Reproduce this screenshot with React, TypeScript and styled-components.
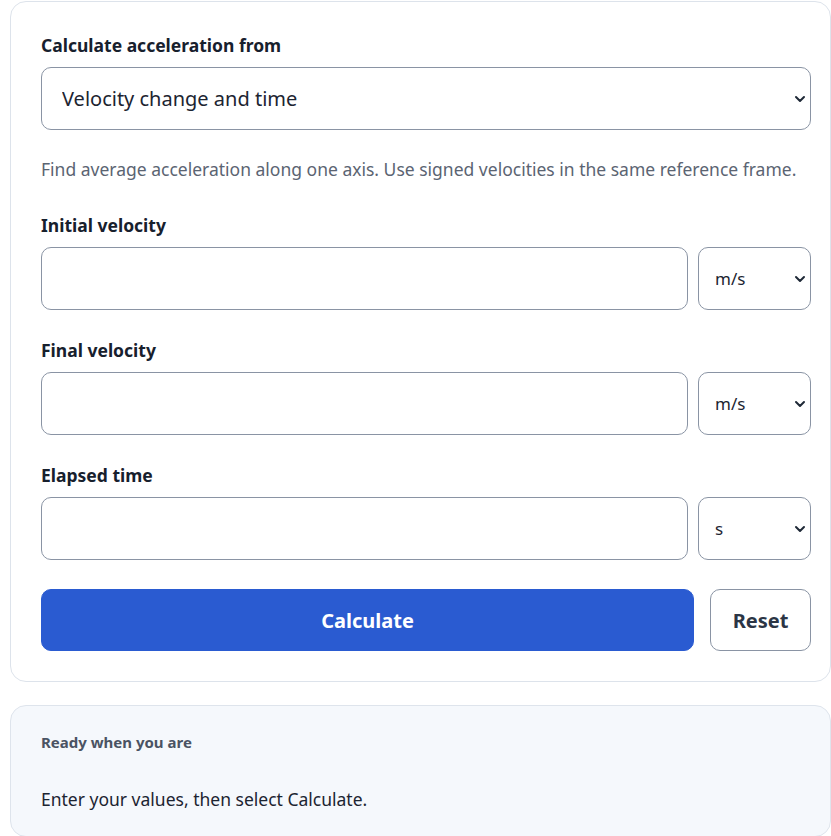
import React from 'react'
import styled, { createGlobalStyle } from 'styled-components'

const GlobalStyle = createGlobalStyle`
  * {
    box-sizing: border-box;
  }
  body {
    margin: 0;
    background: #ffffff;
    font-family: "Noto Sans", "Open Sans", sans-serif;
    color: #1c2431;
  }
`

const Page = styled.div`
  padding: 1px 0 0 10px;
`

const Card = styled.form`
  width: 821px;
  background: #ffffff;
  border: 1px solid #dde3eb;
  border-radius: 16px;
  padding: 30px 19px 30px 30px;
`

const Field = styled.div<{ $gap?: number }>`
  margin-bottom: ${p => p.$gap ?? 27}px;
`

const Label = styled.label`
  display: block;
  font-size: 17.5px;
  font-weight: 700;
  line-height: 26px;
  color: #17202d;
  margin-bottom: 9px;
`

const Help = styled.p`
  margin: 0 0 30px;
  font-size: 17.5px;
  line-height: 26px;
  color: #5b6472;
`

const SelectWrap = styled.div`
  position: relative;
`

const Select = styled.select<{ $size?: number; $pad?: number }>`
  appearance: none;
  width: 100%;
  height: 63px;
  border: 1px solid #8a94a4;
  border-radius: 10px;
  background-color: #ffffff;
  font-family: inherit;
  font-size: ${p => p.$size ?? 17}px;
  color: #1c2431;
  padding: 0 24px 0 ${p => p.$pad ?? 16}px;
  outline: none;
`

const Chevron = styled.svg`
  position: absolute;
  right: 4px;
  top: 50%;
  width: 14px;
  height: 8px;
  margin-top: -4px;
  pointer-events: none;
`

const Row = styled.div`
  display: grid;
  grid-template-columns: 1fr 113px;
  gap: 10px;
`

const Input = styled.input`
  width: 100%;
  height: 63px;
  border: 1px solid #8a94a4;
  border-radius: 10px;
  background: #ffffff;
  font-family: inherit;
  font-size: 17px;
  padding: 0 16px;
  outline: none;
`

const Actions = styled.div`
  display: grid;
  grid-template-columns: 1fr 101px;
  gap: 16px;
  margin-top: 29px;
`

const Button = styled.button<{ $primary?: boolean }>`
  height: 62px;
  border-radius: 10px;
  font-family: inherit;
  font-size: 20px;
  font-weight: 700;
  cursor: pointer;
  border: 1px solid ${p => (p.$primary ? '#2a5bd1' : '#8a94a4')};
  background: ${p => (p.$primary ? '#2a5bd1' : '#ffffff')};
  color: ${p => (p.$primary ? '#ffffff' : '#2b3545')};
`

const Result = styled.section`
  width: 821px;
  margin-top: 23px;
  background: #f5f8fc;
  border: 1px solid #dee4ec;
  border-radius: 16px;
  padding: 26px 30px 24px;
`

const ResultTitle = styled.h2`
  margin: 0 0 34px;
  font-size: 15px;
  font-weight: 700;
  line-height: 20px;
  color: #4a5363;
`

const ResultText = styled.p`
  margin: 0;
  font-size: 17.5px;
  line-height: 26px;
  color: #1c2431;
`

const units = [
  { id: 'v0', label: 'Initial velocity', unit: 'm/s', options: ['m/s', 'km/h', 'mph', 'ft/s'] },
  { id: 'v1', label: 'Final velocity', unit: 'm/s', options: ['m/s', 'km/h', 'mph', 'ft/s'] },
  { id: 't', label: 'Elapsed time', unit: 's', options: ['s', 'min', 'h'] },
]

function Dropdown(props: React.ComponentProps<typeof Select>) {
  return (
    <SelectWrap>
      <Select {...props} />
      <Chevron viewBox="0 0 14 8" aria-hidden="true">
        <path d="M3 2 L7 6 L11 2" fill="none" stroke="#1f2937" strokeWidth="2" strokeLinecap="round" strokeLinejoin="round" />
      </Chevron>
    </SelectWrap>
  )
}

export default function App() {
  return (
    <Page>
      <GlobalStyle />
      <Card onSubmit={e => e.preventDefault()}>
        <Field $gap={26}>
          <Label htmlFor="mode">Calculate acceleration from</Label>
          <Dropdown id="mode" $size={20} $pad={20} defaultValue="vt">
            <option value="vt">Velocity change and time</option>
            <option value="fm">Force and mass</option>
            <option value="dt">Distance and time</option>
          </Dropdown>
        </Field>
        <Help>
          Find average acceleration along one axis. Use signed velocities in the same reference frame.
        </Help>
        {units.map((f, i) => (
          <Field key={f.id} $gap={i === units.length - 1 ? 0 : 27}>
            <Label htmlFor={f.id}>{f.label}</Label>
            <Row>
              <Input id={f.id} type="text" inputMode="decimal" />
              <Dropdown defaultValue={f.unit} aria-label={`${f.label} unit`}>
                {f.options.map(o => (
                  <option key={o} value={o}>{o}</option>
                ))}
              </Dropdown>
            </Row>
          </Field>
        ))}
        <Actions>
          <Button type="submit" $primary>Calculate</Button>
          <Button type="reset">Reset</Button>
        </Actions>
      </Card>
      <Result>
        <ResultTitle>Ready when you are</ResultTitle>
        <ResultText>Enter your values, then select Calculate.</ResultText>
      </Result>
    </Page>
  )
}
